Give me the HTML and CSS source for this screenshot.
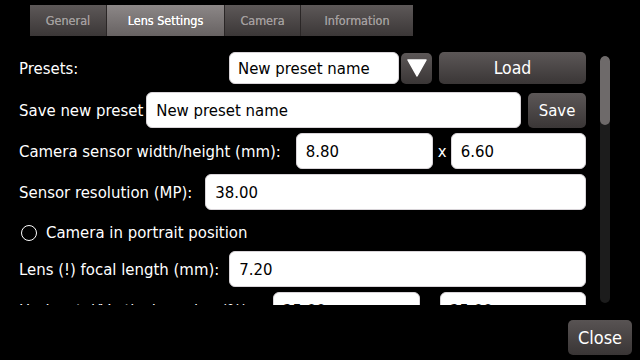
FILE: index.html
```html
<!DOCTYPE html>
<html>
<head>
<meta charset="utf-8">
<link rel="stylesheet" href="styles.css">
</head>
<body>
<div class="tabbar">
  <div class="tab t-general">General</div>
  <div class="tab t-lens active">Lens Settings</div>
  <div class="tab t-camera">Camera</div>
  <div class="tab t-info">Information</div>
</div>
<div class="scrollarea">
  <div class="content">
    <div class="row row-presets">
      <span class="label">Presets:</span>
      <div class="group">
        <div class="field combo">New preset name</div>
        <div class="btn drop"><svg width="22" height="20" viewBox="0 0 22 20"><path d="M2 2 H20 L11 18 Z" fill="#fff" stroke="#fff" stroke-width="1.5" stroke-linejoin="round"/></svg></div>
        <div class="btn load">Load</div>
      </div>
    </div>
    <div class="row">
      <span class="label tight">Save new preset</span>
      <div class="field grow">New preset name</div>
      <div class="btn save">Save</div>
    </div>
    <div class="row">
      <span class="label wide">Camera sensor width/height (mm):</span>
      <div class="field w137">8.80</div>
      <span class="x">x</span>
      <div class="field grow">6.60</div>
    </div>
    <div class="row">
      <span class="label mid">Sensor resolution (MP):</span>
      <div class="field grow">38.00</div>
    </div>
    <div class="row row-check">
      <span class="radio"></span>
      <span class="label">Camera in portrait position</span>
    </div>
    <div class="row">
      <span class="label">Lens (!) focal length (mm):</span>
      <div class="field grow">7.20</div>
    </div>
    <div class="row">
      <span class="label">Horizontal/Vertical overlap (%):</span>
      <div class="field w147 auto">25.00</div>
      <div class="field w146 ml">25.00</div>
    </div>
  </div>
  <div class="scrollbar"><div class="thumb"></div></div>
</div>
<div class="footer">
  <div class="btn close">Close</div>
</div>
</body>
</html>
```
FILE: styles.css
```css
* { box-sizing: border-box; }
html, body { margin: 0; padding: 0; background: #000; }
body {
  width: 640px; height: 360px; overflow: hidden;
  font-family: "DejaVu Sans Condensed", "DejaVu Sans", sans-serif;
  color: #fff;
  font-size: 16.6px;
}
.tabbar {
  display: flex;
  margin: 5px 0 0 30px;
  height: 31px;
  width: 383px;
}
.tab {
  height: 31px;
  display: flex; align-items: center; justify-content: center;
  font-size: 12.5px;
  color: #a39e9e;
  background: linear-gradient(#5d5858, #3b3737);
  border-right: 1px solid #2a2626;
  text-shadow: 0 0 0.4px currentColor;
}
.tab.active { background: linear-gradient(#8c8787, #676262); color: #fff; }
.t-general { width: 77px; }
.t-lens { width: 118px; }
.t-camera { width: 76px; }
.t-info { width: 112px; border-right: none; }

.scrollarea {
  display: flex;
  margin-top: 9px;
  height: 260px;
  overflow: hidden;
}
.content {
  width: 600px;
  padding: 7px 14px 0 19px;
  display: flex; flex-direction: column;
}
.row {
  display: flex; align-items: center;
  height: 36px;
  margin-bottom: 5px;
  flex-shrink: 0;
}
.row-presets { height: 32px; margin-bottom: 8px; justify-content: space-between; }
.group { display: flex; align-items: center; }
.label { white-space: nowrap; margin-right: 10px; }
.label.tight { margin-right: 3px; }
.label.wide { margin-right: 15px; }
.label.mid { margin-right: 13px; }
.field {
  height: 36px;
  background: #fff;
  border: 1px solid #d8d4d8;
  border-radius: 6px;
  color: #000;
  display: flex; align-items: center;
  padding-left: 9px;
  white-space: nowrap;
}
.combo { width: 170px; height: 32px; padding-left: 8px; }
.grow { flex: 1; }
.w137 { width: 137px; flex: none; }
.w147 { width: 147px; flex: none; }
.w146 { width: 146px; flex: none; }
.auto { margin-left: auto; }
.ml { margin-left: 20px; }
.x { margin: 0 4px 0 5px; }
.btn {
  background: linear-gradient(#5c5757, #3a3636);
  border-radius: 5px;
  color: #fff;
  display: flex; align-items: center; justify-content: center;
}
.drop { width: 31px; height: 31px; margin-left: 2px; }
.load { width: 147px; height: 32px; margin-left: 7px; font-size: 17.5px; }
.save { width: 58px; height: 35px; margin-left: 7px; }
.row-check { height: 32px; margin-bottom: 4px; padding-left: 2px; padding-top: 3px; }
.radio {
  width: 16px; height: 16px;
  border: 1.5px solid #fff;
  border-radius: 50%;
  margin-right: 9px;
  flex: none;
}
.scrollbar {
  width: 10px;
  margin-top: 11px;
  height: 247px;
  background: #1c1c1c;
  border-radius: 5px;
  overflow: hidden;
}
.thumb { height: 69px; background: #6e6a6a; border-radius: 5px; }
.footer {
  display: flex; justify-content: flex-end;
  padding: 15px 8px 0 0;
}
.close { width: 64px; height: 35px; font-size: 18px; background: linear-gradient(#585353, #393535); }
```
